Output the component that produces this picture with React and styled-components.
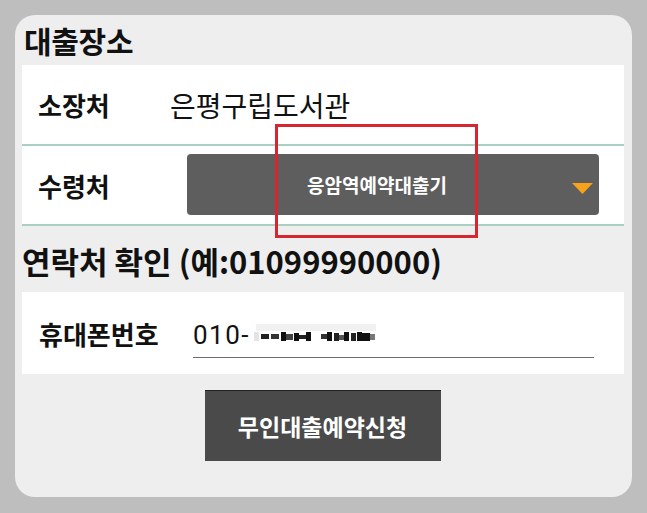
import React from 'react';
import styled, { createGlobalStyle } from 'styled-components';

const GlobalStyle = createGlobalStyle`
  body {
    margin: 0;
    background: #bebebe;
    font-family: 'Noto Sans CJK KR', 'Noto Sans', sans-serif;
  }
`;

const Page = styled.div`
  width: 647px;
  height: 513px;
  padding: 15px 15px 16px 15px;
  box-sizing: border-box;
`;

const Panel = styled.div`
  position: relative;
  height: 482px;
  background: #eeeeee;
  border-radius: 20px;
  padding: 0 8px 0 7px;
  display: flex;
  flex-direction: column;
`;

const SectionTitle = styled.h2`
  margin: 0;
  height: ${(p) => p.$height}px;
  box-sizing: border-box;
  display: flex;
  align-items: center;
  padding-left: ${(p) => p.$indent || 0}px;
  padding-top: ${(p) => p.$offset || 0}px;
  font-size: ${(p) => p.$size || 30}px;
  font-weight: 700;
  color: #111;
  letter-spacing: ${(p) => p.$spacing ?? -0.3}px;
`;

const Card = styled.div`
  background: #ffffff;
  display: flex;
  flex-direction: column;
`;

const Row = styled.div`
  height: ${(p) => p.$height}px;
  display: flex;
  align-items: center;
  padding: 0 25px 0 16px;
  border-bottom: ${(p) => (p.$line ? '2px solid #a9d0c1' : 'none')};
`;

const Label = styled.span`
  width: ${(p) => p.$width}px;
  flex-shrink: 0;
  font-size: 26px;
  font-weight: 700;
  color: #111;
`;

const Value = styled.span`
  font-size: 28px;
  color: #111;
`;

const Select = styled.div`
  flex: 1;
  height: 61px;
  background: #5e5e5e;
  border-radius: 4px;
  display: flex;
  align-items: center;
  justify-content: center;
  position: relative;
  color: #fff;
  font-size: 19px;
  font-weight: 700;
  padding-right: 32px;
  margin-top: -2px;
`;

const Caret = styled.svg`
  position: absolute;
  right: 6px;
  top: 29px;
`;

const PhoneRow = styled.div`
  height: 82px;
  display: flex;
  align-items: center;
  padding: 0 30px 0 17px;
`;

const PhoneField = styled.div`
  flex: 1;
  height: 44px;
  margin-top: 4px;
  border-bottom: 1px solid #6e6e6e;
  display: flex;
  align-items: center;
  gap: 4px;
`;

const PhoneText = styled.span`
  font-family: Roboto, 'Noto Sans', sans-serif;
  font-size: 26px;
  letter-spacing: 1.5px;
  color: #111;
`;

const ButtonWrap = styled.div`
  display: flex;
  justify-content: center;
  padding-top: 16px;
`;

const SubmitButton = styled.button`
  width: 236px;
  height: 71px;
  background: #4a4a4a;
  border: none;
  border-top: 1px solid #222;
  color: #fff;
  font-family: inherit;
  font-size: 23px;
  font-weight: 700;
  margin-right: 1px;
  padding: 0;
`;

const Highlight = styled.div`
  position: absolute;
  left: 260px;
  top: 109px;
  width: 203px;
  height: 114px;
  border: 3px solid #d7262f;
  box-sizing: border-box;
  pointer-events: none;
`;

const Mosaic = () => (
  <svg width="126" height="22" viewBox="0 0 126 22">
    <rect x="2" y="0" width="120" height="7" fill="#f1f1f1" />
    <rect x="0" y="8" width="5" height="9" fill="#e4e4e4" />
    <rect x="7" y="10" width="8" height="5" fill="#222" />
    <rect x="17" y="10" width="8" height="5" fill="#333" />
    <rect x="27" y="8" width="5" height="9" fill="#111" />
    <rect x="32" y="10" width="7" height="6" fill="#444" />
    <rect x="40" y="9" width="5" height="8" fill="#111" />
    <rect x="45" y="11" width="7" height="4" fill="#222" />
    <rect x="52" y="8" width="5" height="9" fill="#111" />
    <rect x="67" y="10" width="6" height="5" fill="#333" />
    <rect x="73" y="8" width="5" height="9" fill="#111" />
    <rect x="80" y="9" width="5" height="8" fill="#222" />
    <rect x="85" y="11" width="5" height="5" fill="#555" />
    <rect x="90" y="8" width="5" height="9" fill="#111" />
    <rect x="97" y="9" width="5" height="8" fill="#222" />
    <rect x="103" y="8" width="5" height="9" fill="#111" />
    <rect x="108" y="9" width="8" height="8" fill="#111" />
    <rect x="116" y="10" width="5" height="6" fill="#777" />
  </svg>
);

const App = () => (
  <Page>
    <GlobalStyle />
    <Panel>
      <SectionTitle $height={50} $indent={2}>대출장소</SectionTitle>
      <Card>
        <Row $height={79} $line>
          <Label $width={132}>소장처</Label>
          <Value>은평구립도서관</Value>
        </Row>
        <Row $height={78} $line>
          <Label $width={149}>수령처</Label>
          <Select>
            응암역예약대출기
            <Caret width="21" height="11" viewBox="0 0 21 11">
              <polygon points="0,0 21,0 10.5,11" fill="#f7a21b" />
            </Caret>
          </Select>
        </Row>
      </Card>
      <SectionTitle $height={66} $offset={3} $size={31} $spacing={0}>
        연락처 확인 (예:01099990000)
      </SectionTitle>
      <Card>
        <PhoneRow>
          <Label $width={154}>휴대폰번호</Label>
          <PhoneField>
            <PhoneText>010-</PhoneText>
            <Mosaic />
          </PhoneField>
        </PhoneRow>
      </Card>
      <ButtonWrap>
        <SubmitButton>무인대출예약신청</SubmitButton>
      </ButtonWrap>
      <Highlight />
    </Panel>
  </Page>
);

export default App;
